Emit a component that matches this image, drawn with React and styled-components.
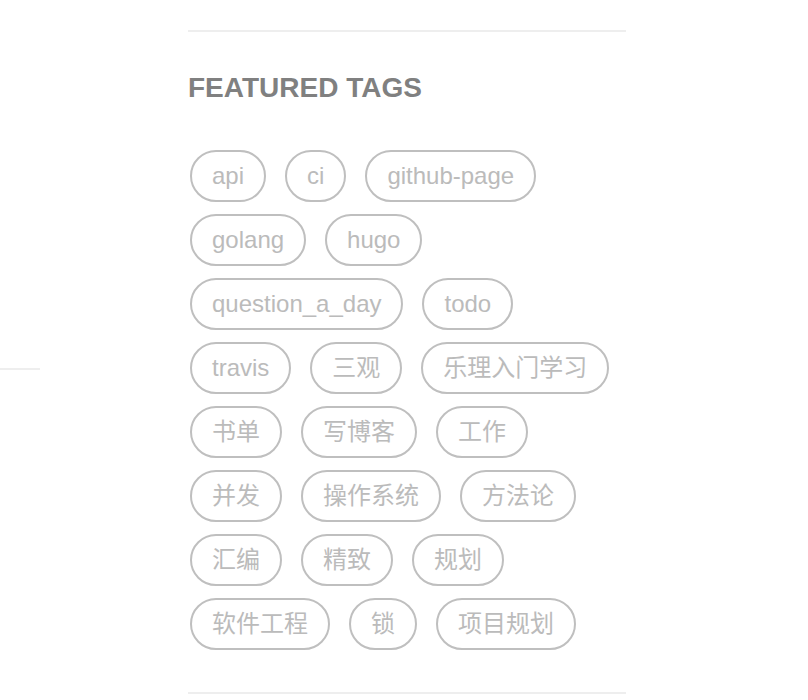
import React from "react";
import styled, { createGlobalStyle } from "styled-components";

const GlobalStyle = createGlobalStyle`
  * { box-sizing: border-box; }
  body {
    margin: 0;
    background: #fff;
    font-family: "Liberation Sans", "Noto Sans CJK SC", sans-serif;
  }
`;

const Page = styled.div`
  display: grid;
  grid-template-columns: 40px minmax(0, 438px);
  column-gap: 148px;
  padding: 30px 0 0;
`;

const PostDivider = styled.hr`
  width: 100%;
  margin: 338px 0 0;
  border: 0;
  border-top: 2px solid #eee;
`;

const Sidebar = styled.aside`
  border-top: 2px solid #eee;
  border-bottom: 2px solid #eee;
  padding: 40px 0 42px;
`;

const Title = styled.h5`
  margin: 0 0 46px;
  font-size: 28px;
  line-height: 32px;
  font-weight: 700;
  color: #808080;
  white-space: nowrap;
`;

const TagList = styled.nav`
  display: flex;
  flex-wrap: wrap;
  gap: 12px 19px;
  padding-left: 2px;
`;

const Tag = styled.a`
  flex: none;
  height: 52px;
  padding: 0 20px;
  border: 2px solid #bfbfbf;
  border-radius: 26px;
  color: #bbb;
  font-size: 24px;
  line-height: 48px;
  text-decoration: none;
  white-space: nowrap;
`;

const tags = [
  "api", "ci", "github-page",
  "golang", "hugo",
  "question_a_day", "todo",
  "travis", "三观", "乐理入门学习",
  "书单", "写博客", "工作",
  "并发", "操作系统", "方法论",
  "汇编", "精致", "规划",
  "软件工程", "锁", "项目规划",
];

export default function App() {
  return (
    <>
      <GlobalStyle />
      <Page>
        <PostDivider />
        <Sidebar>
          <Title>FEATURED TAGS</Title>
          <TagList aria-label="Featured tags">
            {tags.map((tag) => (
              <Tag key={tag} href={`#${tag}`} lang="zh-CN">{tag}</Tag>
            ))}
          </TagList>
        </Sidebar>
      </Page>
    </>
  );
}
